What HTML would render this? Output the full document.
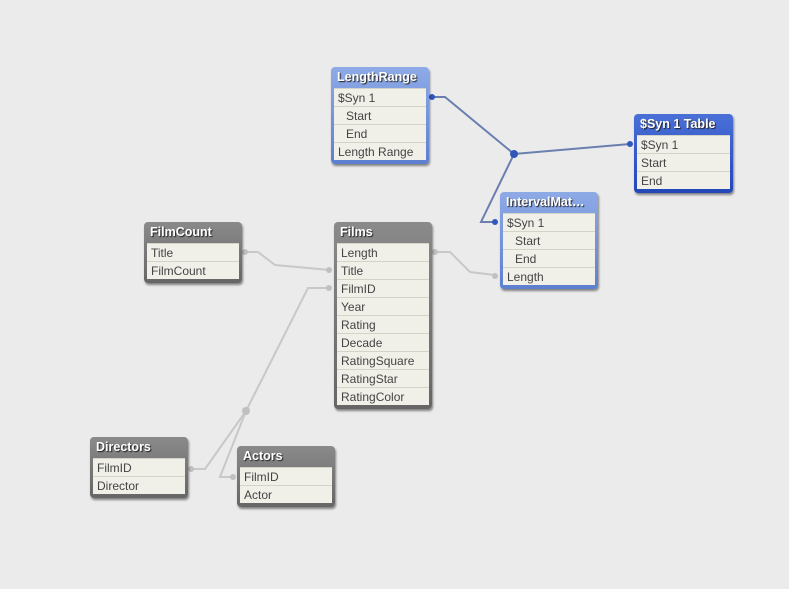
<!DOCTYPE html>
<html><head><meta charset="utf-8"><style>
html,body{margin:0;padding:0}
body{width:789px;height:589px;background:#ebebeb;position:relative;overflow:hidden;font-family:"Liberation Sans","DejaVu Sans",sans-serif}
.b{position:absolute;border-radius:4px;box-shadow:1px 2px 2px rgba(0,0,0,.45);padding:0 3px 4px 3px;box-sizing:border-box}
.g{background:linear-gradient(#8a8a8a,#666)}
.l{background:linear-gradient(#8eaae6,#5d7fd0)}
.d{background:linear-gradient(#4a70d8,#2447b8)}
.h{height:21px;line-height:21px;color:#fff;font-weight:bold;font-size:12.5px;padding-left:3px;text-shadow:1px 1px 1px #222;white-space:nowrap;overflow:hidden}
.r{height:18px;line-height:18px;background:#f0efe8;border-top:1px solid #d4d3c8;box-sizing:border-box;font-size:12px;color:#444;padding-left:4px;white-space:nowrap}
.i{padding-left:12px}
svg{position:absolute;left:0;top:0}
</style></head><body>
<svg width="789" height="589">
<g fill="none" stroke="#c8c8c8" stroke-width="2">
<path d="M245 252 L258 252 L275 265 L330 270"/>
<path d="M435 252 L450 252 L470 272 L495 275"/>
<path d="M190 469 L205 469 L246 411 L308 288 L330 288"/>
<path d="M233 477 L220 477 L246 411"/>
</g>
<g fill="#c0c0c0"><circle cx="245" cy="252" r="3"/><circle cx="329" cy="270" r="3"/><circle cx="329" cy="288" r="3"/><circle cx="435" cy="252" r="3"/><circle cx="495" cy="276" r="3"/><circle cx="191" cy="469" r="3"/><circle cx="233" cy="477" r="3"/><circle cx="246" cy="411" r="4"/></g>
<g fill="none" stroke="#6a7fb0" stroke-width="2">
<path d="M432 97 L445 97 L514 154 L630 144"/>
<path d="M514 154 L481 222 L494 222"/>
</g>
<g fill="#2f58b8"><circle cx="432" cy="97" r="3"/><circle cx="630" cy="144" r="3"/><circle cx="495" cy="222" r="3"/><circle cx="514" cy="154" r="4"/></g>
</svg>

<div class="b l" style="left:331px;top:67px;width:98px"><div class="h">LengthRange</div><div class="r">$Syn 1</div><div class="r i">Start</div><div class="r i">End</div><div class="r">Length Range</div></div>

<div class="b d" style="left:634px;top:114px;width:99px"><div class="h">$Syn 1 Table</div><div class="r">$Syn 1</div><div class="r">Start</div><div class="r">End</div></div>

<div class="b l" style="left:500px;top:192px;width:98px"><div class="h">IntervalMat…</div><div class="r">$Syn 1</div><div class="r i">Start</div><div class="r i">End</div><div class="r">Length</div></div>

<div class="b g" style="left:144px;top:222px;width:98px"><div class="h">FilmCount</div><div class="r">Title</div><div class="r">FilmCount</div></div>

<div class="b g" style="left:334px;top:222px;width:98px"><div class="h">Films</div><div class="r">Length</div><div class="r">Title</div><div class="r">FilmID</div><div class="r">Year</div><div class="r">Rating</div><div class="r">Decade</div><div class="r">RatingSquare</div><div class="r">RatingStar</div><div class="r">RatingColor</div></div>

<div class="b g" style="left:90px;top:437px;width:98px"><div class="h">Directors</div><div class="r">FilmID</div><div class="r">Director</div></div>

<div class="b g" style="left:237px;top:446px;width:98px"><div class="h">Actors</div><div class="r">FilmID</div><div class="r">Actor</div></div>
</body></html>
